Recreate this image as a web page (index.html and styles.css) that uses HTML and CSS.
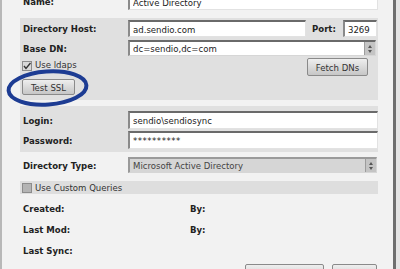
FILE: index.html
```html
<!DOCTYPE html>
<html lang="en">
<head>
  <meta charset="UTF-8" />
  <title>Directory Settings</title>
  <link rel="stylesheet" href="styles.css">
</head>
<body>
  <div class="window">
    <div class="form">
      <div class="row name-row">
        <label class="lbl">Name:</label>
        <input class="input wide" type="text" value="Active Directory" readonly />
      </div>

      <div class="panel dir-panel">
        <div class="row">
          <label class="lbl">Directory Host:</label>
          <input class="input host" type="text" value="ad.sendio.com" readonly />
          <label class="lbl port-lbl">Port:</label>
          <input class="input port" type="text" value="3269" readonly />
        </div>
        <div class="row gap3">
          <label class="lbl">Base DN:</label>
          <div class="select">
            <span>dc=sendio,dc=com</span>
            <span class="arrows"><i class="up"></i><i class="down"></i></span>
          </div>
        </div>
        <div class="row check-row">
          <span class="check checked">
            <svg width="8" height="8" viewBox="0 0 8 8"><path d="M1 4 L3 6.5 L7.5 1" fill="none" stroke="#333" stroke-width="1.4"/></svg>
          </span>
          <span class="check-text">Use ldaps</span>
          <button type="button" class="btn fetch">Fetch DNs</button>
        </div>
        <div class="row">
          <button type="button" class="btn ssl">Test SSL</button>
        </div>
      </div>

      <div class="panel login-panel">
        <div class="row">
          <label class="lbl">Login:</label>
          <input class="input wide tall" type="text" value="sendio\sendiosync" readonly />
        </div>
        <div class="row gap2">
          <label class="lbl">Password:</label>
          <input class="input wide tall pass" type="text" value="**********" readonly />
        </div>
      </div>

      <div class="row type-row">
        <label class="lbl">Directory Type:</label>
        <div class="select disabled">
          <span>Microsoft Active Directory</span>
          <span class="arrows"><i class="up"></i><i class="down"></i></span>
        </div>
      </div>

      <div class="custom-bar">
        <span class="check"></span>
        <span class="check-text">Use Custom Queries</span>
      </div>

      <div class="info">
        <div class="info-row"><span class="lbl info-lbl">Created:</span><span class="lbl">By:</span></div>
        <div class="info-row"><span class="lbl info-lbl">Last Mod:</span><span class="lbl">By:</span></div>
        <div class="info-row"><span class="lbl info-lbl">Last Sync:</span></div>
      </div>

      <div class="actions">
        <button type="button" class="btn save">Save Changes</button>
        <button type="button" class="btn cancel">Cancel</button>
      </div>
    </div>

    <svg class="mark" width="100" height="50" viewBox="0 0 100 50">
      <ellipse cx="47.5" cy="25" rx="39" ry="16.5" fill="none" stroke="#1d3c93" stroke-width="4" transform="rotate(-4 47.5 25)"/>
    </svg>
  </div>
</body>
</html>
```

FILE: styles.css
```css
body {
  margin: 0;
  background: #e4e4e4;
  font-family: 'DejaVu Sans Condensed', 'DejaVu Sans', sans-serif;
  font-size: 9.5px;
  color: #222;
  overflow: hidden;
}
.window {
  position: relative;
  width: 396px;
  height: 269px;
  background: #f2f2f2;
  border-left: 2px solid #b8b8b8;
  border-right: 3px solid #6e6e6e;
  box-sizing: border-box;
  overflow: hidden;
}
.form {
  margin-top: -7px;
  padding-left: 18px;
  width: 358px;
}
.row {
  display: flex;
  align-items: center;
}
.lbl {
  font-weight: bold;
  color: #222;
}
.row > .lbl {
  width: 105px;
  padding-left: 3px;
  flex: none;
}
.input {
  font: inherit;
  color: #222;
  height: 17px;
  box-sizing: border-box;
  padding: 0 3px;
  background: #fff;
  border: 1px solid #e2e2e2;
  border-top: 2px solid #6a6a6a;
  border-left: 2px solid #8a8a8a;
  outline: none;
}
.wide { width: 250px; }
.tall { height: 18px; }
.pass { letter-spacing: 0.5px; }
.host { width: 178px; }
.row > .port-lbl {
  width: 31px;
  padding-left: 6px;
}
.port { width: 34px; }
.panel {
  background: #e0e0e0;
}
.dir-panel {
  margin-top: 8px;
  padding: 2px 0 5px;
}
.login-panel {
  margin-top: 6px;
  padding: 5px 0 3px;
}
.gap3 { margin-top: 3px; }
.gap2 { margin-top: 2px; }
.select {
  display: flex;
  align-items: center;
  justify-content: space-between;
  width: 248px;
  height: 16px;
  box-sizing: border-box;
  padding-left: 3px;
  background: #fff;
  border: 1px solid #d6d6d6;
  border-top: 2px solid #6a6a6a;
  border-left: 2px solid #8a8a8a;
}
.select.disabled {
  background: #d6d6d6;
  color: #444;
  border-top-color: #9a9a9a;
  border-left-color: #9a9a9a;
}
.arrows {
  width: 10px;
  height: 100%;
  background: #c4c4c4;
  border-left: 1px solid #9c9c9c;
  display: flex;
  flex-direction: column;
  align-items: center;
  justify-content: center;
  gap: 2px;
}
.arrows i {
  width: 0;
  height: 0;
  border-left: 2px solid transparent;
  border-right: 2px solid transparent;
}
.arrows .up { border-bottom: 3px solid #555; }
.arrows .down { border-top: 3px solid #555; }
.check-row {
  margin-top: 2px;
  align-items: flex-start;
}
.check {
  width: 8px;
  height: 8px;
  margin: 3px 0 0 2px;
  border: 1px solid #8c8c8c;
  background: #b4b4b4;
  display: flex;
  align-items: center;
  justify-content: center;
}
.check.checked {
  background: #d8d8d8;
}
.check-text {
  margin: 1px 0 0 3px;
  color: #333;
}
.btn {
  font: inherit;
  color: #333;
  border: 1px solid #8a8a8a;
  border-radius: 2px;
  background: linear-gradient(#eeeeee, #c6c6c6);
  padding: 0;
  cursor: pointer;
}
.fetch {
  margin-left: auto;
  margin-right: 10px;
  width: 61px;
  height: 18px;
}
.ssl {
  margin: 3px 0 0 2px;
  width: 53px;
  height: 16px;
}
.type-row {
  margin-top: 5px;
}
.type-row .select {
  width: 249px;
}
.custom-bar {
  margin-top: 8px;
  height: 13px;
  background: #dedede;
  display: flex;
  align-items: center;
}
.custom-bar .check {
  margin-top: 0;
}
.custom-bar .check-text {
  margin-top: 0;
}
.info {
  margin-top: 8px;
  display: flex;
  flex-direction: column;
  gap: 9px;
}
.info-row {
  display: flex;
  height: 12px;
  align-items: center;
}
.info-lbl {
  width: 167px;
  padding-left: 3px;
}
.actions {
  margin-top: 8px;
  display: flex;
  justify-content: flex-end;
  gap: 8px;
  padding-right: 1px;
}
.save {
  width: 79px;
  height: 18px;
}
.cancel {
  width: 45px;
  height: 18px;
}
.mark {
  position: absolute;
  left: -2px;
  top: 63px;
}
```
